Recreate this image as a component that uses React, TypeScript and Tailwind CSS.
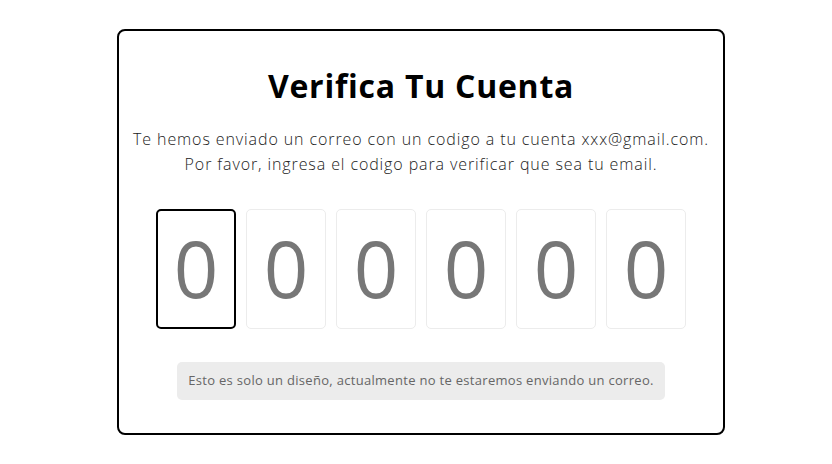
export default function App() {
  const digits = ["0", "0", "0", "0", "0", "0"];

  return (
    <main className="min-h-screen w-full bg-white flex items-center justify-center pl-[10px] font-['Open_Sans',sans-serif]">
      {/* CARD */}
      <div className="w-[608px] h-[406px] border-2 border-black rounded-[8px] flex flex-col items-center pt-[31px]">
        <h1 className="text-[32px] font-bold leading-[48px] tracking-[0.75px] text-black">
          Verifica Tu Cuenta
        </h1>

        <p className="mt-[17px] text-[16px] font-light leading-[25px] tracking-[0.9px] text-[#222] text-center">
          Te hemos enviado un correo con un codigo a tu cuenta xxx@gmail.com.
          <span className="block">
            Por favor, ingresa el codigo para verificar que sea tu email.
          </span>
        </p>

        {/* CODE INPUTS */}
        <div className="mt-[32px] flex gap-[10px]">
          {digits.map((d, i) => (
            <div
              key={i}
              className={
                i === 0
                  ? "w-[80px] h-[120px] rounded-[5px] border-2 border-black flex items-center justify-center"
                  : "w-[80px] h-[120px] rounded-[5px] border border-[#ececec] flex items-center justify-center"
              }
            >
              <span className="text-[78px] leading-none text-[#777] -mt-[3px]">{d}</span>
            </div>
          ))}
        </div>

        <div className="mt-[33px] h-[38px] w-[488px] rounded-[5px] bg-[#ececec] flex items-center justify-center">
          <p className="text-[13px] tracking-[0.3px] text-[#666]">
            Esto es solo un diseño, actualmente no te estaremos enviando un
            correo.
          </p>
        </div>
      </div>
    </main>
  );
}
